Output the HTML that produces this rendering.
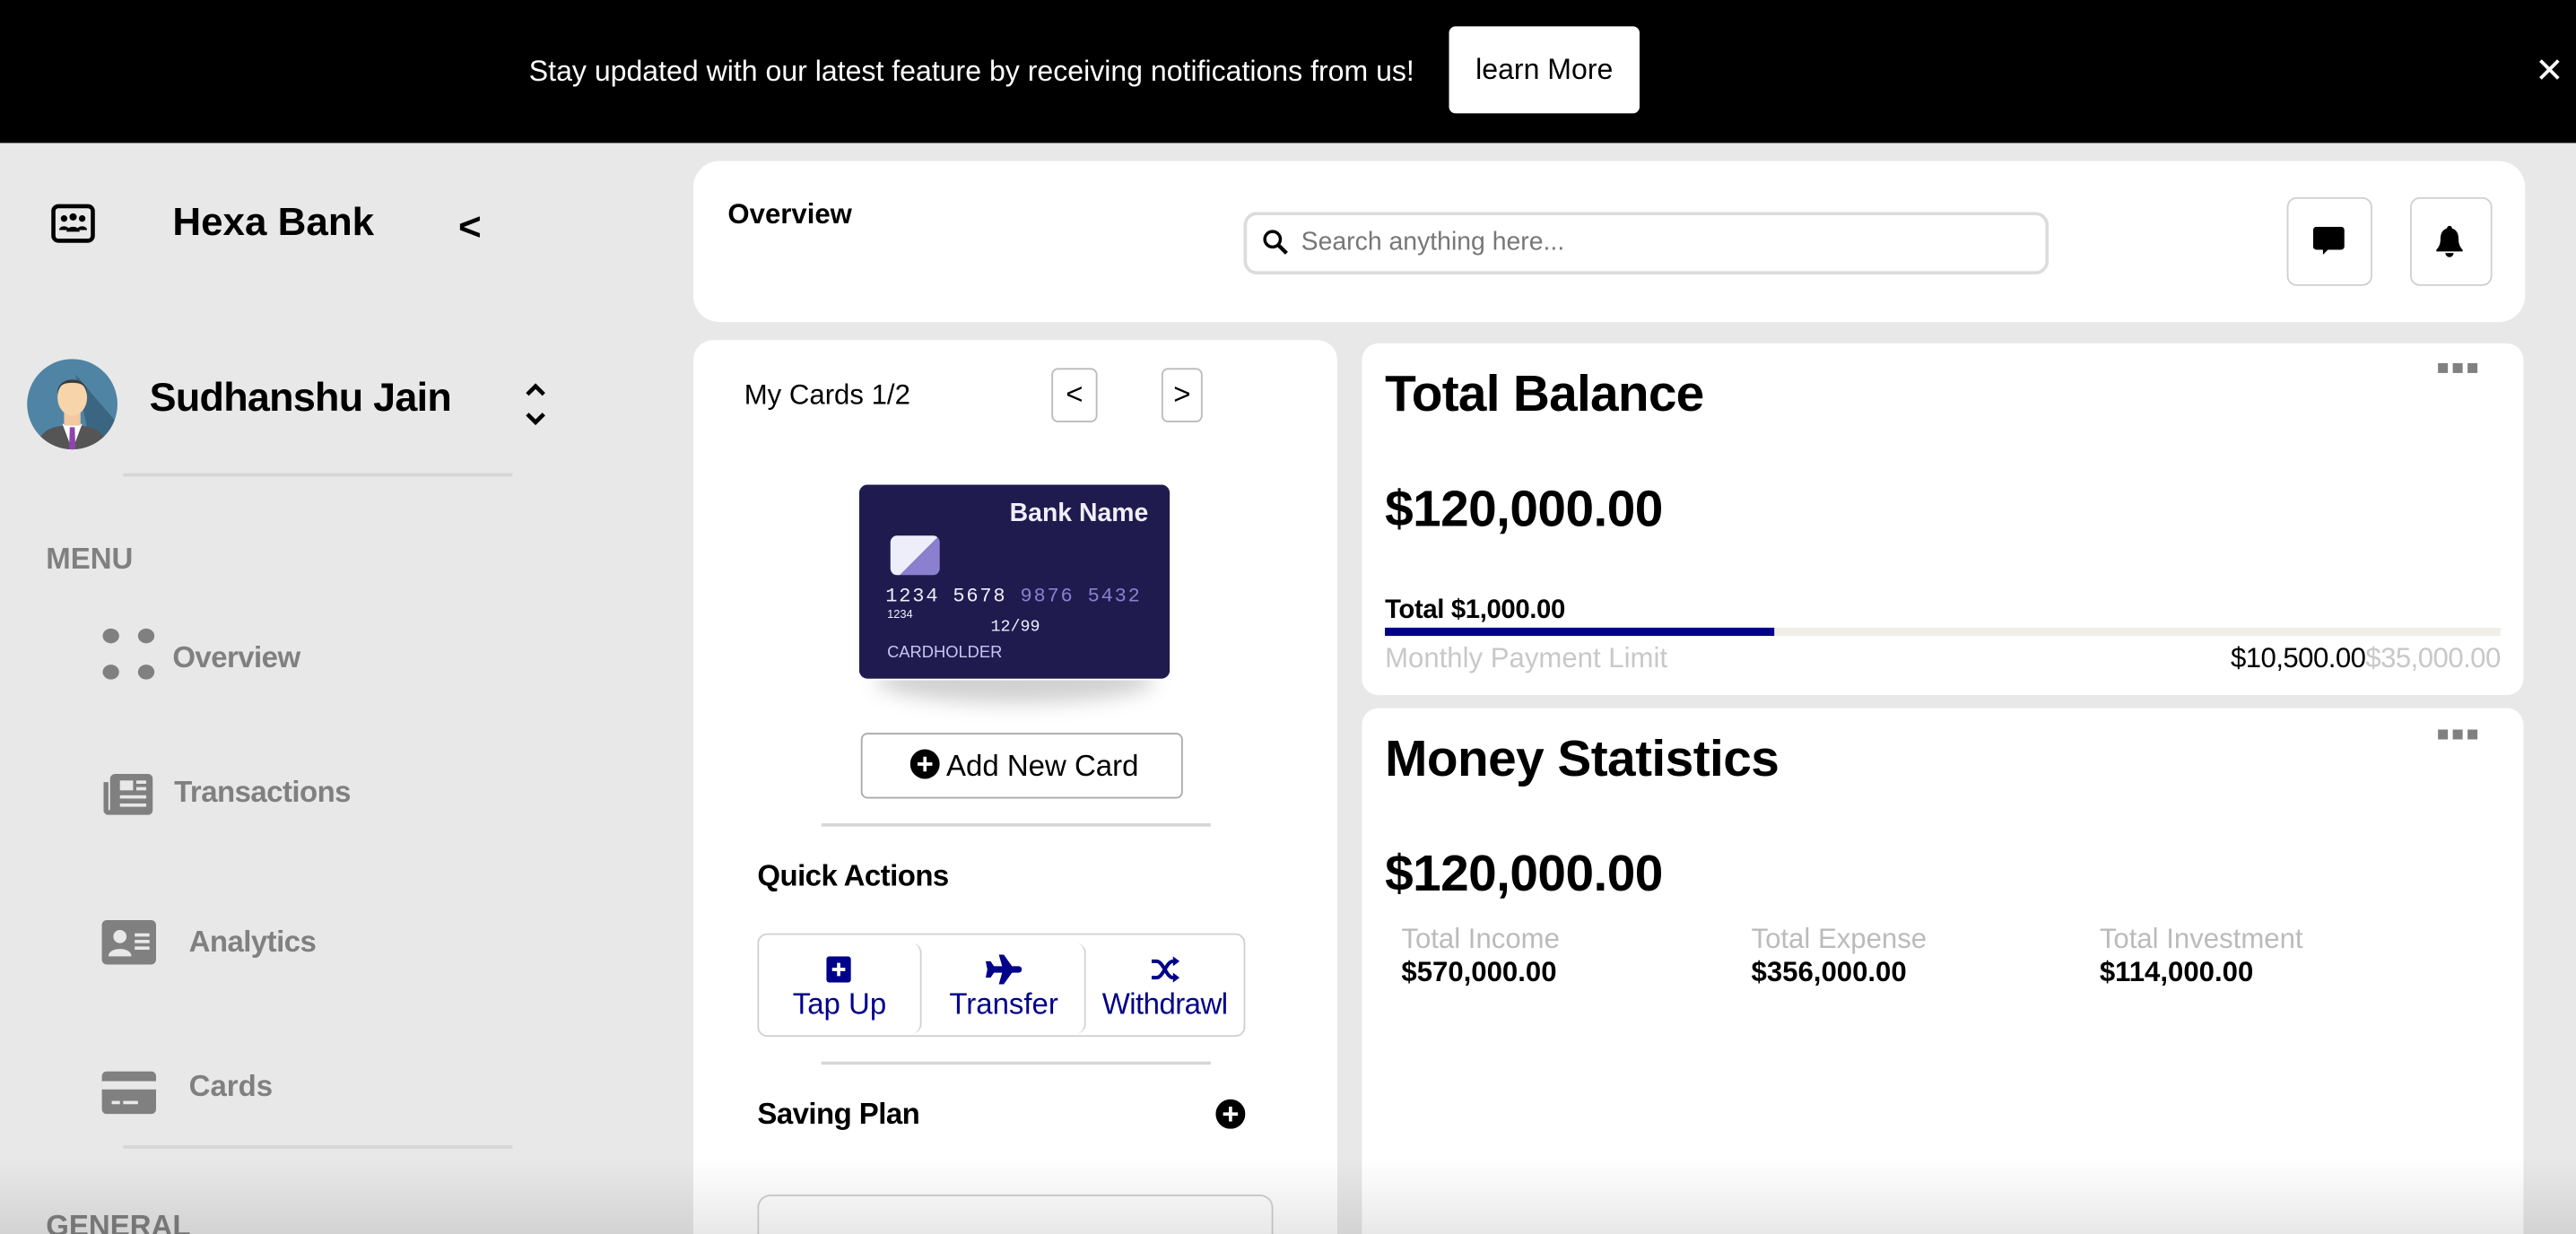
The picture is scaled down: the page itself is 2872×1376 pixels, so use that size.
<!DOCTYPE html>
<html><head><meta charset="utf-8"><style>
html,body{margin:0;padding:0;width:2872px;height:1376px;overflow:hidden;background:#e8e8e8;}
#s{position:absolute;left:0;top:0;width:1568px;height:751px;transform:scale(1.83163,1.83222);transform-origin:0 0;font-family:"Liberation Sans",Arial,sans-serif;background:#e8e8e8;overflow:hidden;}
.a{position:absolute;}
.b{font-weight:bold;}
.card{position:absolute;background:#fff;}
.g{color:#808080;font-weight:bold;font-size:18px;}
.hl{position:absolute;height:2px;background:#d6d6d6;}
.nav{color:#00008b;font-size:18px;text-align:center;}
</style></head><body><div id="s">
<div class="a" style="left:0;top:0;width:1568px;height:87px;background:#000;"></div>
<div class="a" style="left:322px;top:33px;color:#fff;font-size:17.5px;white-space:nowrap;">Stay updated with our latest feature by receiving notifications from us!</div>
<div class="a" style="left:882px;top:16px;width:116px;height:53px;background:#fff;border-radius:4px;font-size:17.5px;line-height:53px;text-align:center;">learn More</div>
<div class="a" style="left:1543px;top:31px;color:#fff;font-size:21px;">✕</div>

<svg class="a" style="left:31px;top:124px" width="27" height="24" viewBox="0 0 27 24"><rect x="1.5" y="1.5" width="24" height="21" rx="3" fill="none" stroke="#000" stroke-width="2.5"/><circle cx="8" cy="9" r="2" /><circle cx="13.5" cy="8" r="2.2"/><circle cx="19" cy="9" r="2"/><path d="M5 16c0-3 6-3 6 0zM9.5 17c0-4 8-4 8 0zM16 16c0-3 6-3 6 0z"/></svg>
<div class="a b" style="left:105px;top:122px;font-size:24px;">Hexa Bank</div>
<div class="a b" style="left:279px;top:125px;font-size:24px;">&lt;</div>
<svg class="a" style="left:16px;top:218px" width="56" height="56" viewBox="0 0 56 56"><defs><clipPath id="c"><circle cx="28" cy="28" r="27.5"/></clipPath></defs><g clip-path="url(#c)"><rect width="56" height="56" fill="#4f84a5"/><path d="M30 10 L60 45 L60 56 L40 56Z" fill="#3a6682"/><path d="M6 56 C8 44 14 41 28 41 C42 41 48 44 50 56Z" fill="#555"/><path d="M22 40 L28 56 L34 40Z" fill="#fff"/><path d="M26.5 42 L29.5 42 L30 56 L26 56Z" fill="#8e44ad"/><rect x="23" y="32" width="10" height="9" fill="#f2c9a0"/><ellipse cx="28" cy="24" rx="9" ry="11" fill="#f8d4aa"/><path d="M19 22 C18 10 38 10 37 22 C36 16 33 15 28 15 C23 15 20 16 19 22Z" fill="#3b3b3b"/></g></svg>
<div class="a b" style="left:91px;top:229px;font-size:24.5px;letter-spacing:-0.4px;">Sudhanshu Jain</div>
<svg class="a" style="left:318px;top:230px" width="16" height="32" viewBox="0 0 16 32"><path d="M3 10 L8 5 L13 10 M3 22 L8 27 L13 22" fill="none" stroke="#000" stroke-width="2.5"/></svg>
<div class="hl" style="left:75px;top:288px;width:237px;height:1.5px;"></div>
<div class="a g" style="left:28px;top:330px;">MENU</div>
<svg class="a" style="left:61px;top:381px" width="35" height="35" viewBox="0 0 35 35" fill="#808080"><ellipse cx="6.5" cy="6" rx="5" ry="4.5"/><ellipse cx="28" cy="6" rx="5" ry="4.5"/><ellipse cx="6.5" cy="28" rx="5" ry="4.5"/><ellipse cx="28" cy="28" rx="5" ry="4.5"/></svg>
<div class="a g" style="left:105px;top:390px;letter-spacing:-0.3px;">Overview</div>
<svg class="a" style="left:63px;top:470px" width="30" height="26" viewBox="0 0 30 26" fill="#808080"><path d="M7 1h20a3 3 0 0 1 3 3v19a3 3 0 0 1-3 3H3a3 3 0 0 1-3-3V6h3v17h1V4a3 3 0 0 1 3-3z"/><rect x="10" y="5" width="8" height="6" fill="#e8e8e8"/><rect x="20" y="5" width="6" height="2" fill="#e8e8e8"/><rect x="20" y="9" width="6" height="2" fill="#e8e8e8"/><rect x="10" y="14" width="16" height="2" fill="#e8e8e8"/><rect x="10" y="19" width="16" height="2" fill="#e8e8e8"/></svg>
<div class="a g" style="left:106px;top:472px;letter-spacing:-0.3px;">Transactions</div>
<svg class="a" style="left:62px;top:560px" width="33" height="27" viewBox="0 0 33 27" fill="#808080"><rect width="33" height="27" rx="3"/><circle cx="11" cy="10" r="4" fill="#e8e8e8"/><path d="M4 22c0-6 14-6 14 0z" fill="#e8e8e8"/><rect x="20" y="8" width="9" height="2" fill="#e8e8e8"/><rect x="20" y="12" width="9" height="2" fill="#e8e8e8"/><rect x="20" y="16" width="9" height="2" fill="#e8e8e8"/></svg>
<div class="a g" style="left:115px;top:563px;letter-spacing:-0.3px;">Analytics</div>
<svg class="a" style="left:62px;top:652px" width="33" height="26" viewBox="0 0 33 26" fill="#808080"><rect width="33" height="26" rx="3"/><rect x="0" y="6" width="33" height="5" fill="#e8e8e8"/><rect x="6" y="18" width="5" height="2" fill="#e8e8e8"/><rect x="13" y="18" width="9" height="2" fill="#e8e8e8"/></svg>
<div class="a g" style="left:115px;top:651px;">Cards</div>
<div class="hl" style="left:75px;top:697px;width:237px;height:1.5px;"></div>
<div class="a g" style="left:28px;top:736px;">GENERAL</div>

<div class="card" style="left:422px;top:98px;width:1115px;height:98px;border-radius:16px;"></div>
<div class="a b" style="left:443px;top:121px;font-size:17px;">Overview</div>
<div class="a" style="left:757px;top:129px;width:486px;height:34px;border:2px solid #dcdcdc;border-radius:8px;"></div>
<svg class="a" style="left:768px;top:139px" width="17" height="17" viewBox="0 0 18 18"><circle cx="7" cy="7" r="5" fill="none" stroke="#000" stroke-width="2"/><path d="M10.5 10.5L16 16" stroke="#000" stroke-width="2.5"/></svg>
<div class="a" style="left:792px;top:139px;font-size:15.5px;color:#777;">Search anything here...</div>
<div class="a" style="left:1392px;top:120px;width:50px;height:52px;border:1.5px solid #d0d0d0;border-radius:6px;"></div>
<svg class="a" style="left:1408px;top:138px" width="20" height="18" viewBox="0 0 20 18"><path d="M2 0h15a2 2 0 0 1 2 2v10a2 2 0 0 1-2 2H9l-3 3v-3H2a2 2 0 0 1-2-2V2a2 2 0 0 1 2-2z"/></svg>
<div class="a" style="left:1467px;top:120px;width:48px;height:52px;border:1.5px solid #d0d0d0;border-radius:6px;"></div>
<svg class="a" style="left:1482px;top:137px" width="18" height="21" viewBox="0 0 18 21"><path d="M9 0.5c1 0 1.5 .7 1.5 1.5 3 .8 4 3.5 4 6.5 0 3 1 5 2.5 6.5v1H1v-1c1.5-1.5 2.5-3.5 2.5-6.5 0-3 1-5.7 4-6.5 0-.8.5-1.5 1.5-1.5z"/><path d="M6.5 17h5a2.5 2.5 0 0 1-5 0z"/></svg>

<div class="card" style="left:422px;top:207px;width:392px;height:544px;border-radius:12px 12px 0 0;"></div>
<div class="a" style="left:453px;top:231px;font-size:17px;">My Cards 1/2</div>
<div class="a" style="left:640px;top:224px;width:26px;height:31px;border:1px solid #bbb;border-radius:4px;text-align:center;line-height:31px;font-size:18px;">&lt;</div>
<div class="a" style="left:707px;top:224px;width:23px;height:31px;border:1px solid #bbb;border-radius:4px;text-align:center;line-height:31px;font-size:18px;">&gt;</div>
<div class="a" style="left:533px;top:400px;width:170px;height:28px;border-radius:50%;background:rgba(0,0,0,.18);filter:blur(6px);"></div>
<div class="a" style="left:522px;top:294px;width:189px;height:118px;background:#1f1b4f;border-radius:6px;border:1px solid #fff;color:#f0eefa;">
 <div class="a b" style="right:13px;top:9px;font-size:15.5px;">Bank Name</div>
 <div class="a" style="left:19px;top:31px;width:30px;height:24px;border-radius:4px;background:linear-gradient(135deg,#eeeefa 55%,#8a80cf 55%);"></div>
 <div class="a" style="left:16px;top:61px;font-size:12px;letter-spacing:1px;font-family:'Liberation Mono',monospace;white-space:nowrap;">1234 5678 <span style="color:#8a80cf">9876 5432</span></div>
 <div class="a" style="left:17px;top:76px;font-size:7px;">1234</div>
 <div class="a" style="left:80px;top:82px;font-size:10px;font-family:'Liberation Mono',monospace;">12/99</div>
 <div class="a" style="left:17px;top:97px;font-size:10px;color:#c9c4f0;">CARDHOLDER</div>
</div>
<div class="a" style="left:524px;top:446px;width:194px;height:38px;border:1px solid #aaa;border-radius:4px;"></div>
<svg class="a" style="left:554px;top:456px" width="18" height="18" viewBox="0 0 18 18"><circle cx="9" cy="9" r="9"/><path d="M9 4.5v9M4.5 9h9" stroke="#fff" stroke-width="2"/></svg>
<div class="a" style="left:576px;top:456px;font-size:18px;">Add New Card</div>
<div class="hl" style="left:500px;top:501px;width:237px;height:1.5px;"></div>
<div class="a b" style="left:461px;top:523px;font-size:18px;letter-spacing:-0.3px;">Quick Actions</div>
<div class="a" style="left:461px;top:568px;width:295px;height:61px;border:1.5px solid #d0d0d0;border-radius:6px;"></div>
<div class="a" style="left:461px;top:574px;width:99px;height:55px;border-right:1.5px solid #d0d0d0;border-radius:0 6px 6px 0;"></div>
<div class="a" style="left:561px;top:574px;width:99px;height:55px;border-right:1.5px solid #d0d0d0;border-radius:0 6px 6px 0;"></div>
<svg class="a" style="left:503px;top:582px" width="15" height="16" viewBox="0 0 15 16"><rect width="15" height="16" rx="2" fill="#00008b"/><path d="M7.5 4v8M3.5 8h8" stroke="#fff" stroke-width="2"/></svg>
<div class="a nav" style="left:461px;top:601px;width:100px;">Tap Up</div>
<svg class="a" style="left:600px;top:581px" width="22" height="18" viewBox="0 0 22 18"><path d="M0 4l3 0 2 3h5L8 0h3l5 7h4a2 2 0 0 1 0 4h-4l-5 7H8l2-7H5l-2 3H0l1-5z" fill="#00008b"/></svg>
<div class="a nav" style="left:561px;top:601px;width:100px;">Transfer</div>
<svg class="a" style="left:700px;top:582px" width="18" height="16" viewBox="0 0 18 16"><path d="M1 3h3c4 0 6 10 10 10h2M1 13h3c4 0 6-10 10-10h2" fill="none" stroke="#00008b" stroke-width="2.2"/><path d="M14 0l4 3-4 3zM14 10l4 3-4 3z" fill="#00008b"/></svg>
<div class="a nav" style="left:661px;top:601px;width:96px;letter-spacing:-0.3px;">Withdrawl</div>
<div class="hl" style="left:500px;top:646px;width:237px;height:1.5px;"></div>
<div class="a b" style="left:461px;top:668px;font-size:18px;letter-spacing:-0.3px;">Saving Plan</div>
<svg class="a" style="left:740px;top:669px" width="18" height="18" viewBox="0 0 18 18"><circle cx="9" cy="9" r="9"/><path d="M9 4.5v9M4.5 9h9" stroke="#fff" stroke-width="2"/></svg>
<div class="a" style="left:461px;top:727px;width:312px;height:24px;border:1.5px solid #d0d0d0;border-bottom:none;border-radius:8px 8px 0 0;"></div>

<div class="card" style="left:829px;top:209px;width:707px;height:214px;border-radius:10px;"></div>
<div class="a" style="left:1484px;top:221px;width:6px;height:6px;background:#808080;"></div>
<div class="a" style="left:1493px;top:221px;width:6px;height:6px;background:#808080;"></div>
<div class="a" style="left:1502px;top:221px;width:6px;height:6px;background:#808080;"></div>
<div class="a b" style="left:843px;top:222px;font-size:31px;letter-spacing:-0.4px;">Total Balance</div>
<div class="a b" style="left:843px;top:292px;font-size:31px;letter-spacing:-0.3px;">$120,000.00</div>
<div class="a b" style="left:843px;top:363px;font-size:16px;letter-spacing:-0.2px;">Total $1,000.00</div>
<div class="a" style="left:843px;top:382px;width:679px;height:5px;background:#f1eee8;"></div>
<div class="a" style="left:843px;top:382px;width:237px;height:5px;background:#00008b;"></div>
<div class="a" style="left:843px;top:391px;font-size:17px;color:#c8c8c8;">Monthly Payment Limit</div>
<div class="a" style="right:46px;top:391px;font-size:17px;white-space:nowrap;letter-spacing:-0.3px;">$10,500.00<span style="color:#c8c8c8">$35,000.00</span></div>

<div class="card" style="left:829px;top:431px;width:707px;height:320px;border-radius:10px 10px 0 0;"></div>
<div class="a" style="left:1484px;top:444px;width:6px;height:6px;background:#808080;"></div>
<div class="a" style="left:1493px;top:444px;width:6px;height:6px;background:#808080;"></div>
<div class="a" style="left:1502px;top:444px;width:6px;height:6px;background:#808080;"></div>
<div class="a b" style="left:843px;top:444px;font-size:31px;letter-spacing:-0.3px;">Money Statistics</div>
<div class="a b" style="left:843px;top:514px;font-size:31px;letter-spacing:-0.3px;">$120,000.00</div>
<div class="a" style="left:853px;top:562px;font-size:17px;color:#bbb;">Total Income</div>
<div class="a b" style="left:853px;top:582px;font-size:17px;">$570,000.00</div>
<div class="a" style="left:1066px;top:562px;font-size:17px;color:#bbb;">Total Expense</div>
<div class="a b" style="left:1066px;top:582px;font-size:17px;">$356,000.00</div>
<div class="a" style="left:1278px;top:562px;font-size:17px;color:#bbb;">Total Investment</div>
<div class="a b" style="left:1278px;top:582px;font-size:17px;">$114,000.00</div>

<div class="a" style="left:0;top:705px;width:1568px;height:46px;background:linear-gradient(rgba(0,0,0,0),rgba(0,0,0,.09));"></div>
</div></body></html>
